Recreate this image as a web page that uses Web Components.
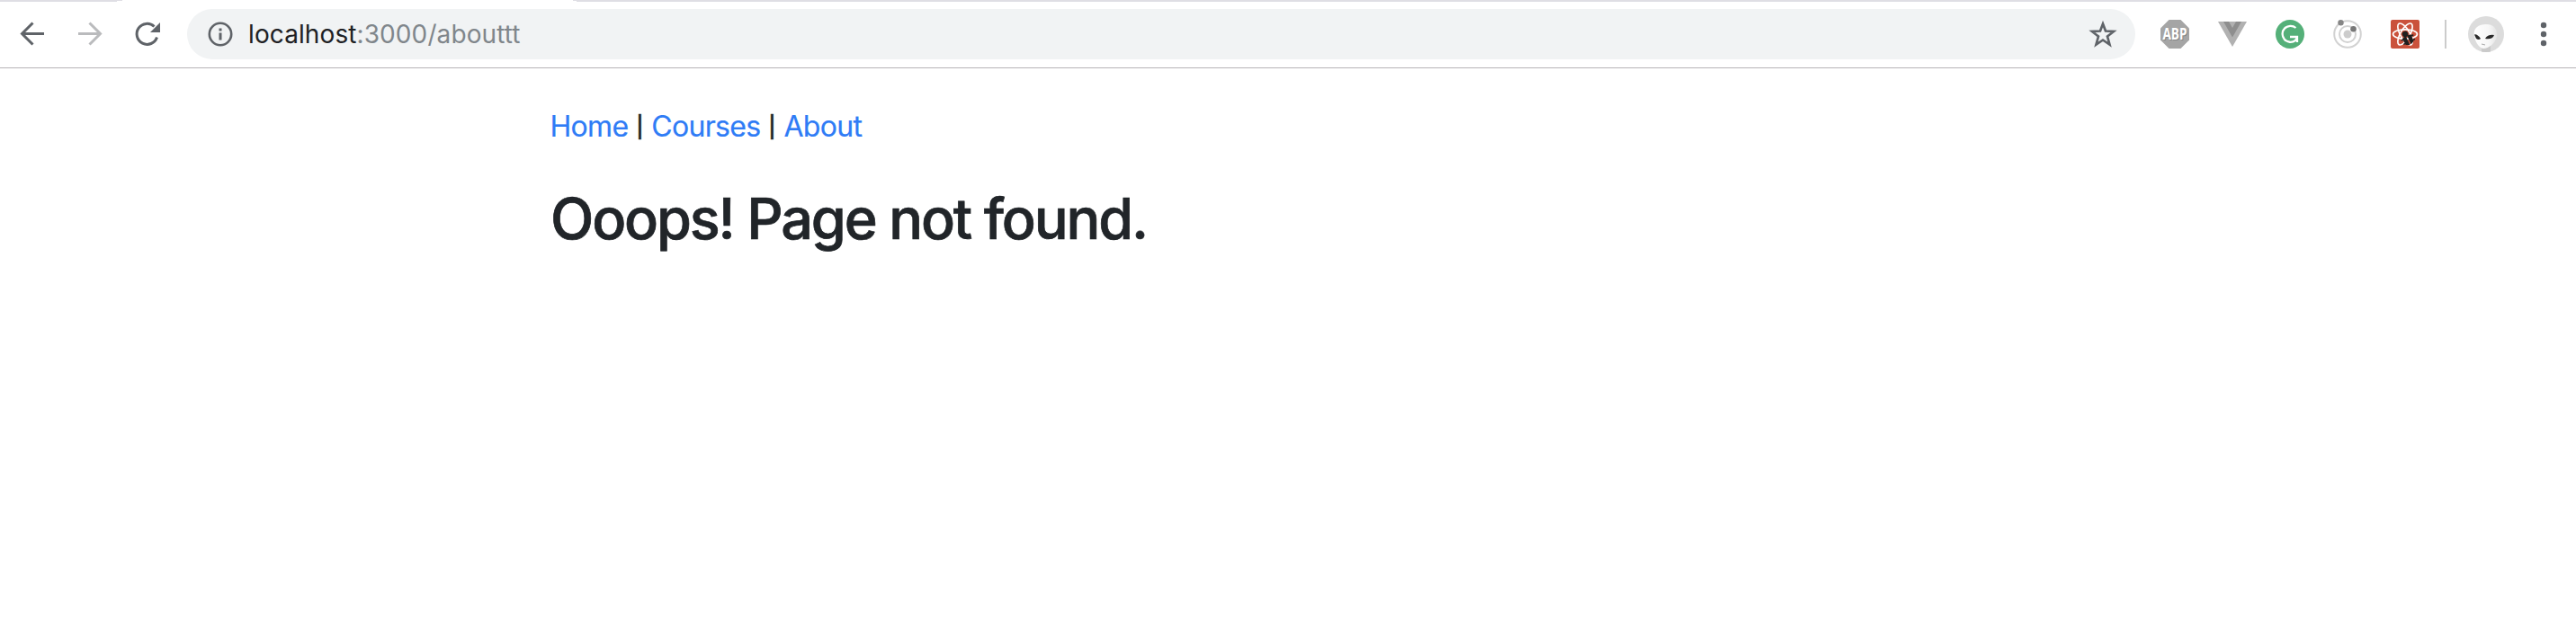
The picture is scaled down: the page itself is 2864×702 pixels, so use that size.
<!DOCTYPE html>
<html lang="en"><head><meta charset="utf-8"><title>React App</title>
<style>html,body{margin:0;background:#fff}body{font-family:Inter,"Liberation Sans",sans-serif}</style></head>
<body>
<browser-toolbar></browser-toolbar>
<page-content><site-nav></site-nav><page-title>Ooops! Page not found.</page-title></page-content>
<script>
const define=(name,html)=>customElements.define(name,class extends HTMLElement{
  constructor(){super();this.attachShadow({mode:'open'}).innerHTML=html;}
});
define('nav-controls',`<style>:host{display:flex;width:208px;height:76px;flex:none}svg{display:block}</style>
<svg width="208" height="76" fill="none" stroke="#5f6368" stroke-width="3">
<path d="M49 37.5H25M36.500 25.500L24.500 37.500L36.500 49.500"/>
<path stroke="#babbbd" d="M87 37.500H111M99.500 25.500L111.500 37.500L99.500 49.500"/>
<path d="M174.500 41.500A11.500 11.500 0 1 1 171.500 29.500"/><path fill="#5f6368" stroke="none" d="M178 25V36H167Z"/></svg>`);
define('address-bar',`<style>:host{display:flex;align-items:center;box-sizing:border-box;width:2166px;height:56px;margin-top:1px;padding:0 20px 0 22px;border-radius:28px;background:#f1f3f4;flex:none;font-size:28px;letter-spacing:.1px;color:#202124}
svg{flex:none}.url{margin-left:16px;white-space:nowrap;flex:1;line-height:32px}.rest{color:#80868b}</style>
<svg width="30" height="30" fill="none" stroke="#5f6368"><circle cx="15" cy="15" r="12.200" stroke-width="2.600"/><path stroke-width="3" d="M15 8.500V11.500M15 13.500V21.500"/></svg>
<div class="url"><span class="host">localhost</span><span class="rest">:3000/abouttt</span></div>
<svg width="32" height="32" fill="none" stroke="#5f6368" stroke-width="2.700"><path d="M16 4.500L19 12.500L28 13L21 18.500L23.500 27.500L16 22.500L8.500 27.500L11 18.500L4 13L13 12.500Z"/></svg>`);
define('extension-icons',`<style>:host{display:block;width:490px;height:76px;flex:none}svg{display:block}text{font-family:"Open Sans",sans-serif;font-weight:700}</style>
<svg width="490" height="76">
<path fill="#a5a5a5" d="M37.500 22H50.500L60 31.500V44.500L50.500 54H37.500L28 44.500V31.500Z"/>
<text x="45" y="45" text-anchor="middle" font-size="17" textLength="27" lengthAdjust="spacingAndGlyphs" fill="#858585">ABP</text>
<text x="44" y="44" text-anchor="middle" font-size="17" textLength="27" lengthAdjust="spacingAndGlyphs" fill="#fff">ABP</text>
<path fill="#b1b1b1" d="M92 24H124L108 52Z"/><path fill="#8e8e8e" d="M98 24H104L108 31L112 24H118L108 41.500Z"/>
<circle cx="172" cy="38" r="16" fill="#55b079"/><path fill="none" stroke="#fff" stroke-width="2.300" d="M178.500 31A9 9 0 1 0 178 45L180 42M172 41H180V47"/>
<g fill="none" stroke="#d2d2d2"><circle cx="236" cy="38" r="14.800" stroke-width="2"/><circle cx="236" cy="38" r="9" stroke-width="2"/></g><circle cx="236" cy="38" r="4.500" fill="#ccc"/><circle cx="228.500" cy="25.300" r="3.200" fill="#858585"/><circle cx="242.500" cy="32.200" r="3.300" fill="#777"/>
<rect x="284" y="22" width="32" height="32" rx="2" fill="#ca523c"/>
<g fill="none" stroke="#fff" stroke-width="1.700"><ellipse cx="300" cy="38" rx="13.500" ry="5.200"/><ellipse cx="300" cy="38" rx="13.500" ry="5.200" transform="rotate(60 300 38)"/><ellipse cx="300" cy="38" rx="13.500" ry="5.200" transform="rotate(120 300 38)"/></g>
<g fill="#201f1f" transform="rotate(-25 304 44)"><circle cx="303" cy="36.800" r="3.300"/><path d="M298 40L302.700 39V50L298.500 48ZM304.200 39L309 40L308 48L304.200 50Z"/><path stroke="#201f1f" stroke-width="1.500" d="M296 41.500H302M305 41.500H311M296.500 46.500H302M305 46.500H310.500"/></g>
<path d="M345 22V54" stroke="#ccc" stroke-width="2"/>
<defs><clipPath id="avatar"><circle cx="390" cy="38" r="20"/></clipPath><linearGradient id="face"><stop stop-color="#fff"/><stop offset=".65" stop-color="#f7f7f7"/><stop offset="1" stop-color="#e4e4e4"/></linearGradient></defs>
<g clip-path="url(#avatar)"><rect x="370" y="18" width="40" height="40" fill="#dcdcdc"/>
<path fill="#cacaca" d="M385 50L395 48L395 58H385Z"/><path fill="url(#face)" d="M377 40C375 31 382 27 390 27C399 27 403 33 402 41C400 48 393 54 387 54C382 53 378 47 377 40Z"/>
<path fill="#292929" d="M377 38.500Q380 37.500 384 43Q382 45 379 43ZM389 43Q392 38 399 39Q397 44.500 389 43Z"/><path stroke="#aaa" fill="none" d="M385 49L389 50"/></g>
<g fill="#5f6368"><circle cx="454" cy="28" r="3.200"/><circle cx="454" cy="38" r="3.200"/><circle cx="454" cy="48" r="3.200"/></g>
</svg>`);
define('browser-toolbar',`<style>:host{display:flex;align-items:center;box-sizing:border-box;width:2864px;height:76px;border-bottom:1px solid #b6b4b6;background:linear-gradient(#dfdee4,#dfdee4) 0 0/136px 1px no-repeat,linear-gradient(#dfdee4,#dfdee4) 0 1px/130px 1px no-repeat,linear-gradient(#dfdee4,#dfdee4) 637px 0/2227px 1px no-repeat,linear-gradient(#dfdee4,#dfdee4) 641px 1px/2223px 1px no-repeat,#fff}</style>
<nav-controls></nav-controls><address-bar></address-bar><extension-icons></extension-icons>`);
define('page-content',`<style>:host{display:block;padding:41px 0 0 611px}</style><slot></slot>`);
define('site-nav',`<style>:host{display:flex;padding-left:.5px;font-size:32px;line-height:48px;letter-spacing:-.7px;color:#212529;white-space:nowrap}a{color:#2f7cf6;text-decoration:none;-webkit-text-stroke:.2px #2f7cf6}
i{font:30px/44px "Liberation Sans",sans-serif;width:26px;text-align:center;letter-spacing:0;-webkit-text-stroke:.5px #212529}</style><a href="/">Home</a><i>|</i><a href="/courses">Courses</a><i>|</i><a href="/about">About</a>`);
define('page-title',`<style>:host{display:block;margin-top:39px}h1{margin:0;padding-left:1px;font-size:63px;line-height:78px;font-weight:500;letter-spacing:-2.15px;color:#212529;-webkit-text-stroke:.7px #212529;white-space:nowrap}</style><h1><slot></slot></h1>`);
</script></body></html>
